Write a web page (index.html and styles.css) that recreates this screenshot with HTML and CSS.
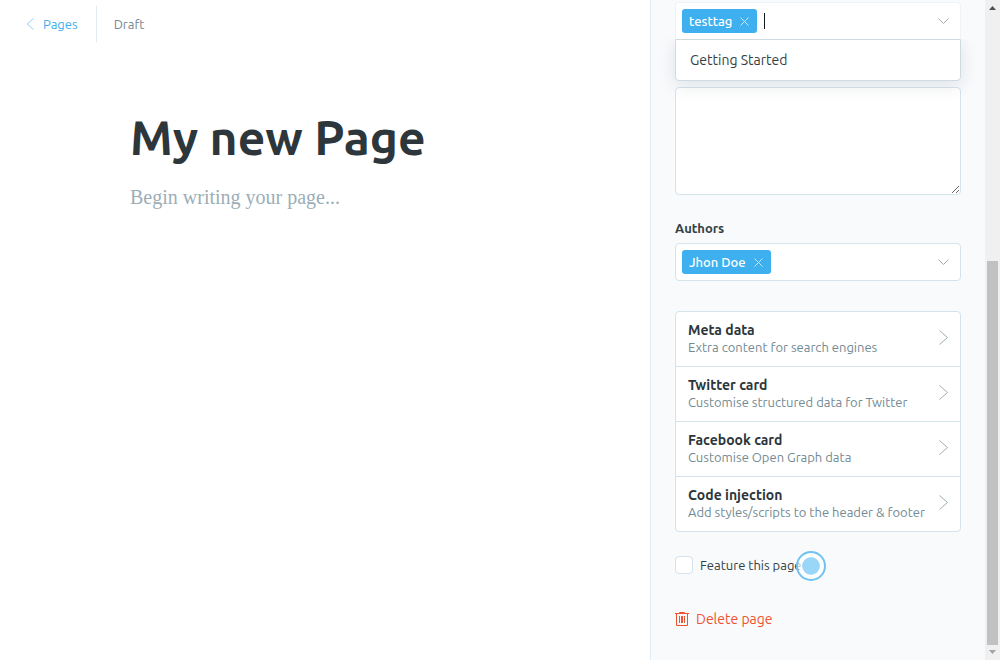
FILE: index.html
```html
<!DOCTYPE html>
<html lang="en">
<head>
<meta charset="utf-8">
<meta name="viewport" content="width=device-width, initial-scale=1">
<title>My new Page</title>
<link rel="stylesheet" href="styles.css">
</head>
<body>
<div class="app">
  <main class="editor">
    <header class="topbar">
      <a class="back" href="#pages">
        <svg width="8" height="12" viewBox="0 0 8 12" aria-hidden="true"><path d="M7.500 .5 1 6l6.500 5.500"/></svg>
        Pages
      </a>
      <span class="status">Draft</span>
    </header>
    <div class="canvas">
      <input class="title" type="text" value="My new Page" aria-label="Title">
      <textarea class="body-text" placeholder="Begin writing your page..." aria-label="Content"></textarea>
    </div>
  </main>

  <aside class="settings">
    <div class="token-field token-field-open">
      <span class="token">testtag
        <button type="button" aria-label="Remove testtag"><svg width="9" height="9" viewBox="0 0 9 9"><path d="M.5.5l8 8M8.500.5l-8 8"/></svg></button>
      </span>
      <span class="caret"></span>
      <input class="token-input" type="text" role="combobox" aria-expanded="true" aria-controls="tag-options" aria-label="Tags">
      <svg class="chevron-down" width="11" height="7" viewBox="0 0 11 7" aria-hidden="true"><path d="M.5 .5l5 5 5-5"/></svg>
      <ul class="options" id="tag-options" role="listbox">
        <li role="option">Getting Started</li>
      </ul>
    </div>

    <textarea class="excerpt" aria-label="Excerpt"></textarea>

    <label class="field-label" for="authors">Authors</label>
    <div class="token-field">
      <span class="token">Jhon Doe
        <button type="button" aria-label="Remove Jhon Doe"><svg width="9" height="9" viewBox="0 0 9 9"><path d="M.5.5l8 8M8.500.5l-8 8"/></svg></button>
      </span>
      <input class="token-input" id="authors" type="text" role="combobox" aria-expanded="false">
      <svg class="chevron-down" width="11" height="7" viewBox="0 0 11 7" aria-hidden="true"><path d="M.5 .5l5 5 5-5"/></svg>
    </div>

    <nav class="panels">
      <button class="panel" type="button">
        <span class="panel-text"><b>Meta data</b><span>Extra content for search engines</span></span>
        <svg width="9" height="15" viewBox="0 0 9 15" aria-hidden="true"><path d="M.5.5l8 7-8 7"/></svg>
      </button>
      <button class="panel" type="button">
        <span class="panel-text"><b>Twitter card</b><span>Customise structured data for Twitter</span></span>
        <svg width="9" height="15" viewBox="0 0 9 15" aria-hidden="true"><path d="M.5.5l8 7-8 7"/></svg>
      </button>
      <button class="panel" type="button">
        <span class="panel-text"><b>Facebook card</b><span>Customise Open Graph data</span></span>
        <svg width="9" height="15" viewBox="0 0 9 15" aria-hidden="true"><path d="M.5.5l8 7-8 7"/></svg>
      </button>
      <button class="panel" type="button">
        <span class="panel-text"><b>Code injection</b><span>Add styles/scripts to the header &amp; footer</span></span>
        <svg width="9" height="15" viewBox="0 0 9 15" aria-hidden="true"><path d="M.5.5l8 7-8 7"/></svg>
      </button>
    </nav>

    <div class="feature">
      <input class="checkbox" type="checkbox" id="feature">
      <label for="feature">Feature this page</label>
      <span class="pointer"></span>
    </div>

    <button class="delete" type="button">
      <svg width="14" height="14" viewBox="0 0 14 14" aria-hidden="true"><path d="M0 1.500h14M4.500 1V.5h5V1M1.500 1.500v12h11v-12M4.500 4v7M6.500 4v7M7.500 4v7M9.500 4v7"/></svg>
      Delete page
    </button>
  </aside>

  <div class="scrollbar" aria-hidden="true">
    <svg width="7" height="4" viewBox="0 0 7 4"><path fill="#505050" d="M0 4 3.500 0 7 4z"/></svg>
    <div class="track"><div class="thumb"></div></div>
    <svg width="7" height="4" viewBox="0 0 7 4"><path fill="#a3a3a3" d="M0 0h7L3.500 4z"/></svg>
  </div>
</div>
</body>
</html>
```
FILE: styles.css
```css
*,
*::before,
*::after {
  box-sizing: border-box;
}

body {
  margin: 0;
  background: #fff;
  color: #343f44;
  font: 13px/20px Ubuntu, "Open Sans", "Noto Sans", sans-serif;
}

button,
input,
textarea {
  margin: 0;
  padding: 0;
  border: 0;
  background: none;
  color: inherit;
  font: inherit;
  outline: 0;
}

svg {
  flex: none;
  display: block;
  fill: none;
}

.app {
  display: flex;
  min-height: 100vh;
}

/* Editor */

.editor {
  flex: 1;
  min-width: 0;
  display: flex;
  flex-direction: column;
}

.topbar {
  display: flex;
  align-items: center;
  padding: 6px 26px;
}

.back {
  display: flex;
  align-items: center;
  gap: 9px;
  height: 36px;
  padding-right: 18px;
  border-right: 1px solid #dfecf6;
  color: #3eb0ef;
  text-decoration: none;
}

.back svg {
  stroke: #8fd0f5;
}

.status {
  padding-left: 17px;
  color: #738a94;
}

.canvas {
  flex: 1;
  display: flex;
  flex-direction: column;
  gap: 14px;
  padding: 57px 40px 40px 130px;
}

.title {
  width: 100%;
  height: 64px;
  color: #2c363b;
  font-size: 48px;
  line-height: 60px;
  font-weight: 700;
}

.body-text {
  flex: 1;
  resize: none;
  font: 20px/28px "Liberation Serif", serif;
}

.body-text::placeholder {
  color: #9baeb8;
  opacity: 1;
}

/* Settings */

.settings {
  flex: none;
  width: 335px;
  display: flex;
  flex-direction: column;
  padding: 2px 24px 24px;
  border-left: 1px solid #dfecf6;
  background: #f8fafc;
}

.token-field {
  position: relative;
  display: flex;
  align-items: center;
  height: 38px;
  padding: 0 11px 0 6px;
  border: 1px solid #d5e3eb;
  border-radius: 4px;
  background: #fff;
}

.token-field-open {
  border-color: #edf3f7;
  border-bottom-color: #fff;
  border-radius: 4px 4px 0 0;
}

.token {
  display: flex;
  align-items: center;
  gap: 8px;
  height: 24px;
  padding: 0 8px 0 7px;
  border-radius: 3px;
  background: #3eb0ef;
  color: #fff;
  font-weight: 500;
}

.token svg {
  stroke: #c5e7fa;
}

.caret {
  width: 1px;
  height: 16px;
  margin-left: 7px;
  background: #15171a;
}

.token-input {
  flex: 1;
  min-width: 0;
}

.chevron-down {
  stroke: #9baeb8;
}

.options {
  position: absolute;
  top: 100%;
  left: -1px;
  right: -1px;
  margin: 0;
  padding: 9px 14px;
  border: 1px solid #d0dae1;
  border-radius: 0 0 4px 4px;
  background: #fff;
  box-shadow: 0 4px 18px rgba(40, 60, 80, 0.12);
  list-style: none;
  font-size: 14px;
  line-height: 22px;
  clip-path: inset(0 -24px -24px);
}

.excerpt {
  height: 108px;
  margin: 47px 0 23px;
  border: 1px solid #d5e3eb;
  border-radius: 4px;
  background: #fff;
  resize: vertical;
}

.field-label {
  margin-bottom: 5px;
  font-weight: 700;
}

.panels {
  display: flex;
  flex-direction: column;
  margin: 30px 0 23px;
  border: 1px solid #d5e3eb;
  border-radius: 4px;
  background: #fff;
}

.panel {
  display: flex;
  align-items: center;
  justify-content: space-between;
  height: 54px;
  padding: 0 12px 4px;
  text-align: left;
  cursor: pointer;
}

.panel + .panel {
  height: 55px;
  border-top: 1px solid #d5e3eb;
}

.panel svg {
  stroke: #9baeb8;
}

.panel-text {
  display: flex;
  flex-direction: column;
  padding-top: 4px;
  color: #738a94;
  font-size: 13px;
  line-height: 17px;
}

.panel-text b {
  color: #2c363b;
  font-size: 14px;
}

.feature {
  display: flex;
  align-items: center;
  position: relative;
  gap: 7px;
}

.checkbox {
  appearance: none;
  width: 18px;
  height: 18px;
  border: 1px solid #d5e3eb;
  border-radius: 4px;
  background: #fff;
}

.pointer {
  position: absolute;
  top: -4px;
  left: 121px;
  width: 30px;
  height: 30px;
  padding: 4px;
  border: 2px solid #70c3f0;
  border-radius: 50%;
  background: rgba(130, 205, 245, 0.8) content-box;
  box-shadow: inset 0 0 0 4px rgba(255, 255, 255, 0.7);
}

.delete {
  display: flex;
  align-items: center;
  align-self: flex-start;
  gap: 7px;
  margin-top: 33px;
  color: #f05230;
  font-size: 14px;
  line-height: 22px;
  cursor: pointer;
}

.delete svg {
  stroke: #f05230;
}

/* Scrollbar */

.scrollbar {
  flex: none;
  width: 15px;
  display: flex;
  flex-direction: column;
  align-items: center;
  padding: 6px 0;
  background: #f0f0f0;
}

.track {
  flex: 1;
  display: flex;
  flex-direction: column;
  padding-bottom: 5px;
}

.track::before {
  content: "";
  flex: 251;
}

.thumb {
  flex: 384;
  width: 11px;
  background: #c1c1c1;
}
```
